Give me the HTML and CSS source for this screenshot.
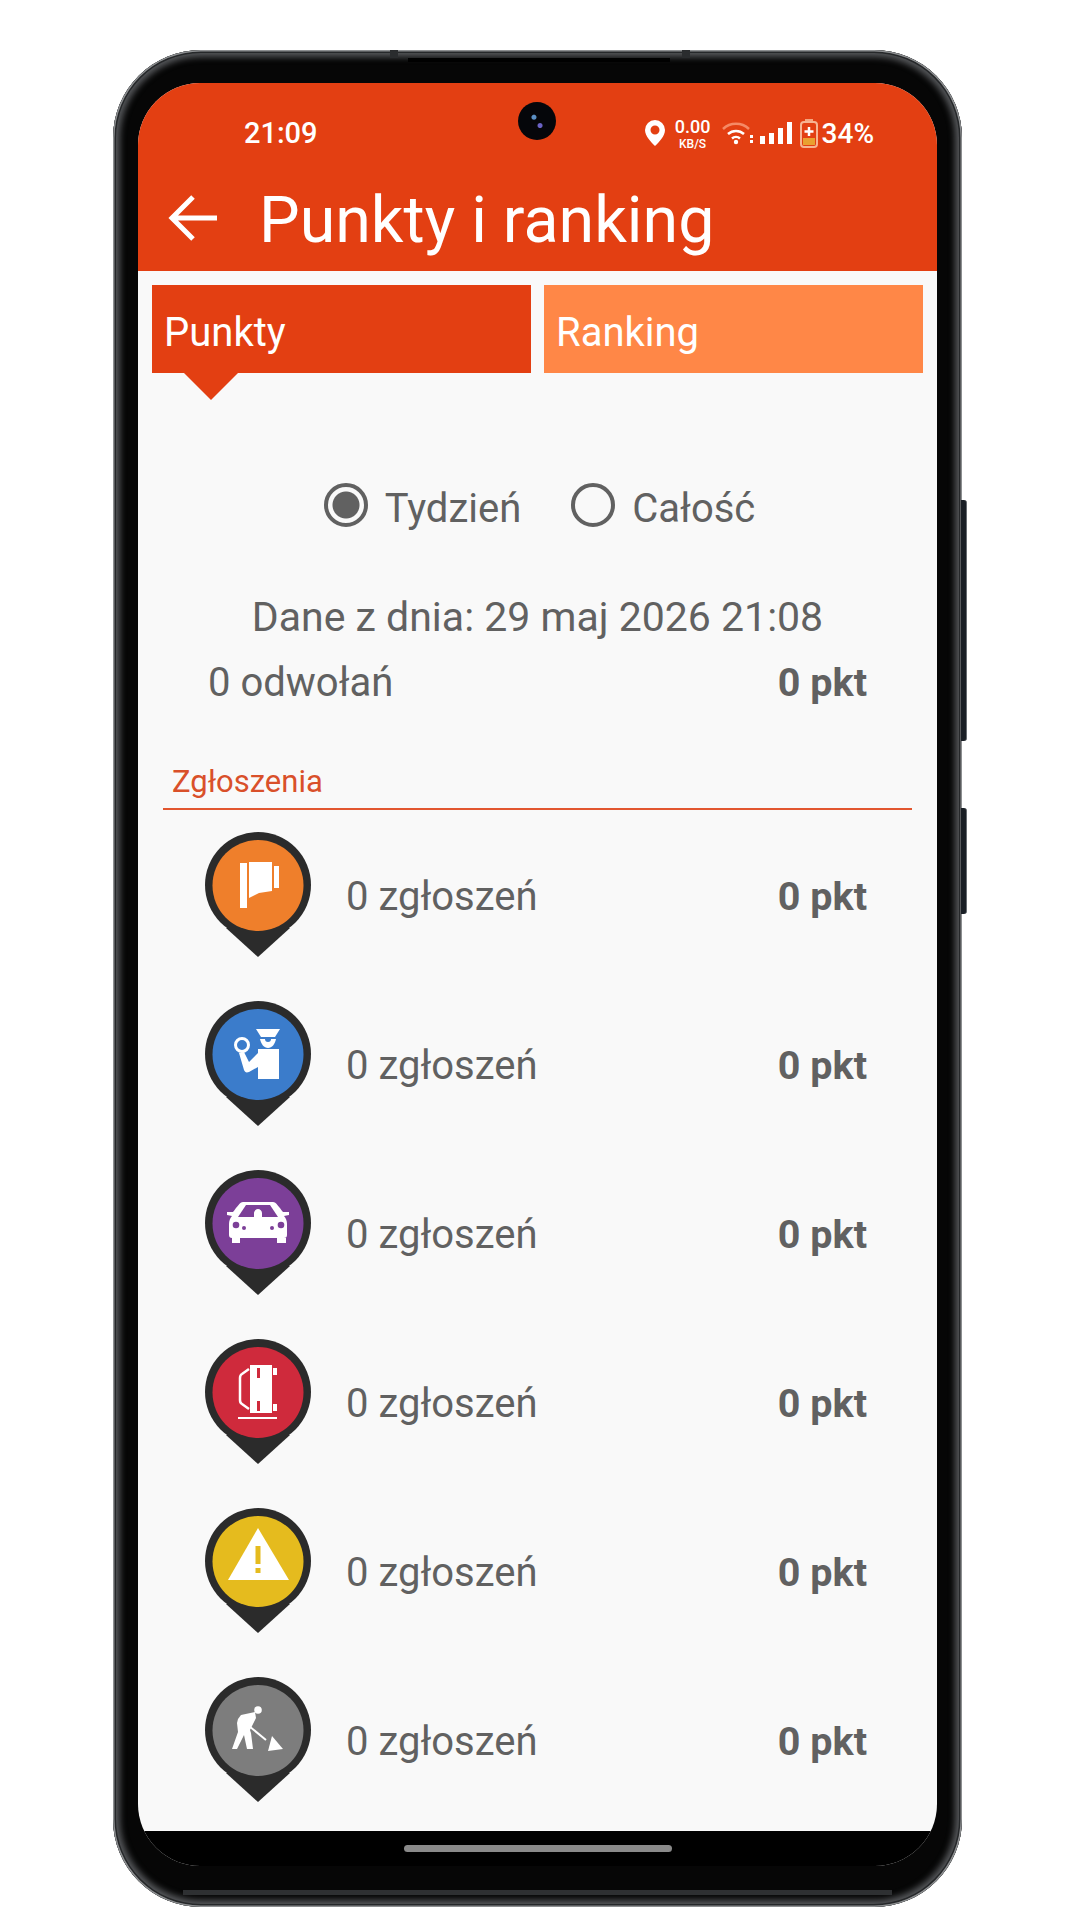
FILE: index.html
```html
<!doctype html>
<html lang="pl">
<head>
    <meta charset="utf-8">
    <title>Punkty i ranking</title>
    <link rel="stylesheet" href="styles.css">
</head>
<body>

<div class="phone">
    <span class="side-key side-key-power"></span>
    <span class="side-key side-key-volume"></span>
    <span class="frame-notch"></span>
    <span class="frame-mark frame-mark-left"></span>
    <span class="frame-mark frame-mark-right"></span>
    <span class="frame-chin"></span>

    <div class="screen">
        <span class="camera"></span>

        <header class="app-head">
            <div class="status-bar">
                <span class="status-time">21:09</span>
                <div class="status-icons">
                    <svg class="ic-location" viewBox="0 0 20 26"><path d="M10 0a10 10 0 0 1 10 10c0 6-6 12-10 16C6 22 0 16 0 10A10 10 0 0 1 10 0zm0 5.500a4.500 4.500 0 1 0 0 9 4.500 4.500 0 0 0 0-9z" fill="#fff"/></svg>
                    <div class="net-speed">
                        <span class="net-value">0.00</span>
                        <span class="net-unit">KB/S</span>
                    </div>
                    <svg class="ic-wifi" viewBox="0 0 32 24">
                        <path d="M1 8a19 19 0 0 1 26 0" fill="none" stroke="#f58a66" stroke-width="2.500"/>
                        <path d="M6 13a12 12 0 0 1 16 0" fill="none" stroke="#fff" stroke-width="2.500"/>
                        <path d="M10 17.500a6 6 0 0 1 8 0" fill="none" stroke="#fff" stroke-width="2.500"/>
                        <circle cx="14" cy="21" r="2.200" fill="#fff"/>
                        <rect x="28" y="14" width="3" height="3" fill="#fff"/>
                        <rect x="28" y="19" width="3" height="3" fill="#fff"/>
                    </svg>
                    <svg class="ic-signal" viewBox="0 0 32 24">
                        <rect x="0" y="15" width="5" height="8" fill="#fff"/>
                        <rect x="9" y="12" width="5" height="11" fill="#fff"/>
                        <rect x="18" y="7" width="5" height="16" fill="#fff"/>
                        <rect x="27" y="1" width="5" height="22" fill="#fff"/>
                    </svg>
                    <svg class="ic-battery" viewBox="0 0 18 29">
                        <rect x="5" y="0" width="8" height="3" fill="#f5a57f"/>
                        <rect x="1" y="3" width="16" height="25" rx="3" fill="none" stroke="#f7b391" stroke-width="2"/>
                        <rect x="3" y="19" width="12" height="7" fill="#e9a030"/>
                        <path d="M9 8v9M4.500 12.500h9" stroke="#fff" stroke-width="2.500"/>
                    </svg>
                    <span class="status-battery">34%</span>
                </div>
            </div>
            <div class="toolbar">
                <svg class="ic-back" viewBox="0 0 50 48"><path d="M49 24H4M25 3L4 24l21 21" fill="none" stroke="#fff" stroke-width="5"/></svg>
                <h1 class="toolbar-title">Punkty i ranking</h1>
            </div>
        </header>

        <main class="content">
            <div class="tabs">
                <div class="tab tab-active">Punkty</div>
                <div class="tab">Ranking</div>
            </div>

            <div class="period">
                <span class="radio radio-on"></span>
                <span class="period-label">Tydzień</span>
                <span class="radio radio-off"></span>
                <span class="period-label">Całość</span>
            </div>

            <p class="data-date">Dane z dnia: 29 maj 2026 21:08</p>

            <div class="score-row">
                <span>0 odwołań</span>
                <b>0 pkt</b>
            </div>

            <div class="section-title">Zgłoszenia</div>

            <ul class="reports">
                <li class="report">
                    <svg class="pin" viewBox="0 0 106 125">
                        <circle cx="53" cy="53" r="53" fill="#2b2b2b"/>
                        <polygon points="53,125 21,96 85,96" fill="#2b2b2b"/>
                        <circle cx="53" cy="53.500" r="45.500" fill="#ef7f2b"/>
                        <rect x="35" y="31" width="7" height="45" fill="#fff"/>
                        <polygon points="44,30 67,30 67,59 54,61 44,66" fill="#fff"/>
                        <rect x="69" y="34" width="5" height="22" fill="#fff"/>
                    </svg>
                    <span class="report-name">0 zgłoszeń</span>
                    <b>0 pkt</b>
                </li>
                <li class="report">
                    <svg class="pin" viewBox="0 0 106 125">
                        <circle cx="53" cy="53" r="53" fill="#2b2b2b"/>
                        <polygon points="53,125 21,96 85,96" fill="#2b2b2b"/>
                        <circle cx="53" cy="53.500" r="45.500" fill="#3b7ccb"/>
                        <path d="M51 28h24l-5 8H56z" fill="#fff"/>
                        <path d="M55 38h16c-1 5-4 9-8 9s-7-4-8-9z" fill="#fff"/>
                        <path d="M60 38h6c0 2-1 3-3 3s-3-1-3-3z" fill="#3b7ccb"/>
                        <circle cx="37" cy="44" r="6.500" fill="none" stroke="#fff" stroke-width="3"/>
                        <path d="M39 51l5 10 9-9v-4h21v30H53V66l-9 5c-3 1-4 0-5-2l-5-17z" fill="#fff"/>
                    </svg>
                    <span class="report-name">0 zgłoszeń</span>
                    <b>0 pkt</b>
                </li>
                <li class="report">
                    <svg class="pin" viewBox="0 0 106 125">
                        <circle cx="53" cy="53" r="53" fill="#2b2b2b"/>
                        <polygon points="53,125 21,96 85,96" fill="#2b2b2b"/>
                        <circle cx="53" cy="53.500" r="45.500" fill="#7c3f98"/>
                        <path d="M38 32h30c3 0 6 5 10 10h6v3l-5 1c2 2 3 5 3 8v11c0 2-1 3-3 3H27c-2 0-3-1-3-3V54c0-3 1-6 3-8l-5-1v-3h6c4-5 7-10 10-10z" fill="#fff"/>
                        <path d="M41 35h24l8 12H33z" fill="#7c3f98"/>
                        <path d="M49 47v-4c0-2 2-4 4-4s4 2 4 4v4z" fill="#fff"/>
                        <circle cx="31" cy="55" r="3.300" fill="#7c3f98"/>
                        <circle cx="39" cy="58" r="2" fill="#7c3f98"/>
                        <circle cx="67" cy="58" r="2" fill="#7c3f98"/>
                        <circle cx="76" cy="55" r="3.300" fill="#7c3f98"/>
                        <rect x="27" y="68" width="8" height="5" fill="#fff"/>
                        <rect x="72" y="68" width="9" height="5" fill="#fff"/>
                    </svg>
                    <span class="report-name">0 zgłoszeń</span>
                    <b>0 pkt</b>
                </li>
                <li class="report">
                    <svg class="pin" viewBox="0 0 106 125">
                        <circle cx="53" cy="53" r="53" fill="#2b2b2b"/>
                        <polygon points="53,125 21,96 85,96" fill="#2b2b2b"/>
                        <circle cx="53" cy="53.500" r="45.500" fill="#cf2a3c"/>
                        <rect x="45" y="26" width="22" height="48" fill="#fff"/>
                        <path d="M44 30l-7 5c-2 1-2 2-2 4v22c0 2 0 3 2 4l7 5" fill="none" stroke="#fff" stroke-width="2.500"/>
                        <rect x="52" y="29" width="3" height="10" fill="#cf2a3c"/>
                        <rect x="52" y="62" width="3" height="10" fill="#cf2a3c"/>
                        <rect x="68" y="29" width="4" height="7" fill="#fff"/>
                        <rect x="68" y="65" width="4" height="7" fill="#fff"/>
                        <rect x="33" y="78" width="39" height="2" fill="#fff"/>
                    </svg>
                    <span class="report-name">0 zgłoszeń</span>
                    <b>0 pkt</b>
                </li>
                <li class="report">
                    <svg class="pin" viewBox="0 0 106 125">
                        <circle cx="53" cy="53" r="53" fill="#2b2b2b"/>
                        <polygon points="53,125 21,96 85,96" fill="#2b2b2b"/>
                        <circle cx="53" cy="53.500" r="45.500" fill="#e5bb1e"/>
                        <polygon points="53,20 23,72 84,72" fill="#fff"/>
                        <rect x="50.500" y="38" width="5" height="18" fill="#e5bb1e"/>
                        <rect x="50.500" y="60" width="5" height="5" fill="#e5bb1e"/>
                    </svg>
                    <span class="report-name">0 zgłoszeń</span>
                    <b>0 pkt</b>
                </li>
                <li class="report">
                    <svg class="pin" viewBox="0 0 106 125">
                        <circle cx="53" cy="53" r="53" fill="#2b2b2b"/>
                        <polygon points="53,125 21,96 85,96" fill="#2b2b2b"/>
                        <circle cx="53" cy="53.500" r="45.500" fill="#7d7d7d"/>
                        <circle cx="53" cy="33" r="3.800" fill="#fff"/>
                        <path d="M36 38l14-3 1 6-6 12 1 3 2 16h-6l-3-14-7 14h-5l6-17-1-9 1-4z" fill="#fff"/>
                        <path d="M44 49l17 14" stroke="#fff" stroke-width="2"/>
                        <polygon points="63,74 78,72 67,59" fill="#fff"/>
                    </svg>
                    <span class="report-name">0 zgłoszeń</span>
                    <b>0 pkt</b>
                </li>
            </ul>
        </main>

        <div class="nav-bar"><span class="home-bar"></span></div>
    </div>
</div>

</body>
</html>
```

FILE: styles.css
```css
html,
body {
    width: 100%;
    height: 100%;
    padding: 0;
    margin: 0;
    background: #fff;
}

body {
    padding: 50px 0 0 113px;
    box-sizing: border-box;
    font-family: Roboto, "Liberation Sans", sans-serif;
    color: #616161;
    overflow: hidden;
}

.phone {
    position: relative;
    box-sizing: border-box;
    width: 849px;
    height: 1857px;
    padding: 33px 25px 0 25px;
    background: #060606;
    border-radius: 88px;
    box-shadow: inset 0 0 0 1.500px #8d8f91, inset 0 0 0 3px #26282a, inset 0 0 6px 7px #55575a;
}

.frame-notch {
    position: absolute;
    top: 8px;
    left: 295px;
    width: 262px;
    height: 4px;
    background: #000;
}

.frame-mark {
    position: absolute;
    top: 0;
    width: 8px;
    height: 8px;
    background: #2a2c2e;
}

.frame-mark-left {
    left: 277px;
}

.frame-mark-right {
    left: 569px;
}

.frame-chin {
    position: absolute;
    left: 70px;
    right: 70px;
    bottom: 12px;
    height: 5px;
    background: #2e3032;
}

.side-key {
    position: absolute;
    right: -5px;
    box-sizing: border-box;
    width: 6px;
    background: #1a1f25;
    border-right: 1px solid #666b70;
    border-radius: 0 3px 3px 0;
}

.side-key-power {
    top: 450px;
    height: 241px;
}

.side-key-volume {
    top: 758px;
    height: 106px;
}

.screen {
    position: relative;
    display: flex;
    flex-direction: column;
    height: 1783px;
    border-radius: 62px;
    overflow: hidden;
    background: #f9f9f9;
}

.camera {
    position: absolute;
    top: 19px;
    left: 380px;
    width: 38px;
    height: 38px;
    border-radius: 50%;
    background: radial-gradient(circle at 42% 40%, #5b8fc4 0 2px, transparent 3px), radial-gradient(circle at 58% 62%, #6a62c4 0 2px, transparent 3px), #05060a;
}

/* head */
.app-head {
    height: 188px;
    background: #e33f12;
    color: #fff;
}

.status-bar {
    display: flex;
    align-items: center;
    justify-content: space-between;
    height: 40px;
    padding: 30px 63px 0 106px;
}

.status-time {
    font-size: 29px;
    font-weight: 500;
}

.status-icons {
    display: flex;
    align-items: center;
    height: 40px;
}

.ic-location {
    width: 20px;
    height: 26px;
    margin-right: 8px;
}

.net-speed {
    display: flex;
    flex-direction: column;
    align-items: center;
    width: 40px;
    margin-right: 9px;
    font-weight: 500;
}

.net-value {
    font-size: 18px;
    line-height: 21px;
}

.net-unit {
    font-size: 12px;
    line-height: 14px;
}

.ic-wifi {
    width: 32px;
    height: 24px;
    margin-right: 6px;
}

.ic-signal {
    width: 32px;
    height: 24px;
    margin-right: 8px;
}

.ic-battery {
    width: 18px;
    height: 29px;
    margin-right: 4px;
}

.status-battery {
    font-size: 28px;
    font-weight: 500;
}

.toolbar {
    display: flex;
    align-items: center;
    height: 118px;
    padding: 16px 0 0 30px;
    box-sizing: border-box;
}

.ic-back {
    width: 50px;
    height: 48px;
    margin: 0 41px 4px 0;
}

.toolbar-title {
    margin: 0;
    font-size: 64.500px;
    font-weight: 400;
}

/* content */
.content {
    flex: 1;
    min-height: 0;
}

.tabs {
    display: flex;
    gap: 13px;
    margin-top: 14px;
    padding: 0 14px;
}

.tab {
    position: relative;
    box-sizing: border-box;
    flex: 1;
    height: 88px;
    padding: 4px 0 0 12px;
    font-size: 40px;
    line-height: 88px;
    color: #fff;
    background: #ff8747;
}

.tab-active {
    background: #e33f12;
}

.tab-active::after {
    content: '';
    position: absolute;
    top: 88px;
    left: 32px;
    border-style: solid;
    border-width: 27px 27px 0 27px;
    border-color: #e33f12 transparent transparent transparent;
}

.period {
    display: flex;
    align-items: center;
    justify-content: center;
    height: 44px;
    margin-top: 110px;
    padding-left: 4px;
    font-size: 40px;
}

.period-label {
    padding-top: 6px;
}

.radio {
    box-sizing: border-box;
    width: 44px;
    height: 44px;
    margin-right: 17px;
    border: 4px solid #616161;
    border-radius: 50%;
}

.radio-on {
    background: radial-gradient(circle, #616161 0 13px, transparent 14px);
}

.radio-off {
    margin-left: 50px;
}

.data-date {
    height: 44px;
    margin: 68px 0 0;
    font-size: 41px;
    line-height: 44px;
    text-align: center;
}

.score-row {
    display: flex;
    justify-content: space-between;
    height: 44px;
    margin-top: 22px;
    padding: 0 70px;
    font-size: 40px;
    line-height: 44px;
}

.score-row b,
.report b {
    font-size: 39.500px;
}

.section-title {
    height: 46px;
    margin: 57px 25px 0;
    padding-left: 9px;
    font-size: 31px;
    line-height: 39px;
    color: #d9502a;
    border-bottom: 2px solid #e2562f;
}

.reports {
    margin: 2px 0 0;
    padding: 0;
    list-style: none;
}

.report {
    display: flex;
    align-items: center;
    height: 169px;
    padding: 0 70px 0 67px;
    font-size: 40px;
}

.pin {
    width: 106px;
    height: 125px;
    margin: 0 35px 4px 0;
    flex: none;
}

.report-name {
    flex: 1;
}

.nav-bar {
    display: flex;
    align-items: flex-start;
    justify-content: center;
    height: 35px;
    background: #000;
}

.home-bar {
    width: 268px;
    height: 7px;
    margin-top: 14px;
    border-radius: 4px;
    background: #8a8a8a;
}
```
